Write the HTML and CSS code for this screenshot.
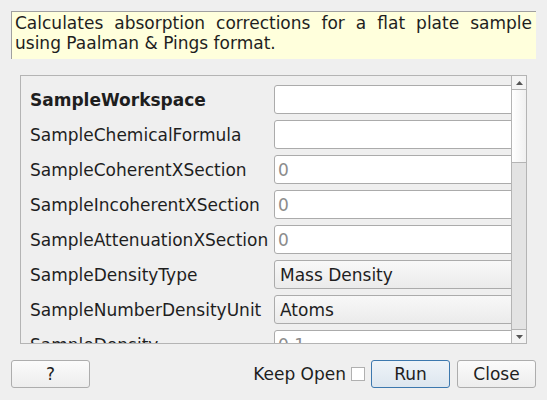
FILE: index.html
```html
<!DOCTYPE html>
<html>
<head>
<meta charset="utf-8">
<link rel="stylesheet" href="styles.css">
</head>
<body>
<div class="desc">Calculates absorption corrections for a flat plate sample using Paalman &amp; Pings format.</div>
<div class="scroll">
  <div class="viewport">
    <div class="form">
      <div class="label bold">SampleWorkspace</div><div class="field"></div>
      <div class="label">SampleChemicalFormula</div><div class="field"></div>
      <div class="label">SampleCoherentXSection</div><div class="field ph">0</div>
      <div class="label">SampleIncoherentXSection</div><div class="field ph">0</div>
      <div class="label">SampleAttenuationXSection</div><div class="field ph">0</div>
      <div class="label">SampleDensityType</div><div class="field combo">Mass Density</div>
      <div class="label">SampleNumberDensityUnit</div><div class="field combo">Atoms</div>
      <div class="label">SampleDensity</div><div class="field ph">0.1</div>
    </div>
  </div>
  <div class="scrollbar">
    <div class="arrow up"><svg width="7" height="4" viewBox="0 0 7 4"><path d="M0 4L3.5 0L7 4Z" fill="#555"/></svg></div>
    <div class="handle"></div>
    <div class="track"></div>
    <div class="arrow down"><svg width="7" height="4" viewBox="0 0 7 4"><path d="M0 0L3.5 4L7 0Z" fill="#555"/></svg></div>
  </div>
</div>
<div class="buttons">
  <div class="btn help">?</div>
  <div class="spacer"></div>
  <div class="keep">Keep Open <span class="check"></span></div>
  <div class="btn run">Run</div>
  <div class="btn close">Close</div>
</div>
</body>
</html>
```
FILE: styles.css
```css
html, body {
  margin: 0;
  padding: 0;
  background: #efefef;
  font-family: "DejaVu Sans", sans-serif;
  font-size: 17px;
  color: #1e1e1e;
  width: 547px;
  height: 400px;
  overflow: hidden;
}
.desc {
  margin: 11px 11px 0 11px;
  height: 48px;
  box-sizing: border-box;
  background: #ffffdc;
  border-top: 1px solid #a0a0a0;
  border-left: 1px solid #a0a0a0;
  padding: 1px 4px 0 3px;
  text-align: justify;
  line-height: 20px;
}
.scroll {
  margin: 16px 0 0 20px;
  width: 507px;
  height: 269px;
  box-sizing: border-box;
  border: 1px solid #b4b4b4;
  display: flex;
}
.viewport {
  flex: 1;
  overflow: hidden;
  padding: 9px 0 0 9px;
}
.form {
  display: grid;
  grid-template-columns: 244px 260px;
  grid-auto-rows: 29px;
  row-gap: 6px;
}
.label {
  display: flex;
  align-items: center;
  white-space: nowrap;
}
.bold { font-weight: bold; }
.field {
  box-sizing: border-box;
  border: 1px solid #ababab;
  border-radius: 3px;
  background: #fff;
  display: flex;
  align-items: center;
  padding-left: 3px;
}
.ph { color: #8c8c8c; }
.combo {
  background: linear-gradient(#f8f8f8, #ebebeb);
  color: #1e1e1e;
  padding-left: 5px;
}
.scrollbar {
  width: 14px;
  border-left: 1px solid #b4b4b4;
  display: flex;
  flex-direction: column;
  background: #e3e3e3;
}
.arrow {
  height: 13px;
  background: #f4f4f4;
  display: flex;
  align-items: center;
  justify-content: center;
}
.arrow.up { border-bottom: 1px solid #b4b4b4; }
.arrow.down { border-top: 1px solid #b4b4b4; }
.handle {
  height: 72px;
  background: linear-gradient(90deg, #ffffff, #f0f0f0);
  border-bottom: 1px solid #b4b4b4;
}
.track { flex: 1; }
.buttons {
  display: flex;
  align-items: center;
  margin: 16px 11px 0 11px;
  height: 28px;
}
.btn {
  box-sizing: border-box;
  width: 79px;
  height: 28px;
  border: 1px solid #adadad;
  border-radius: 3px;
  background: linear-gradient(#fbfbfb, #ededed);
  display: flex;
  align-items: center;
  justify-content: center;
}
.spacer { flex: 1; }
.keep {
  display: flex;
  align-items: center;
  margin-right: 6px;
}
.check {
  display: inline-block;
  box-sizing: border-box;
  width: 14px;
  height: 14px;
  margin-left: 5px;
  border: 1px solid #b0b0b0;
  background: #fff;
}
.run {
  border-color: #3c78ae;
  background: linear-gradient(#eef3f8, #dde6ef);
  margin-right: 7px;
}
```
